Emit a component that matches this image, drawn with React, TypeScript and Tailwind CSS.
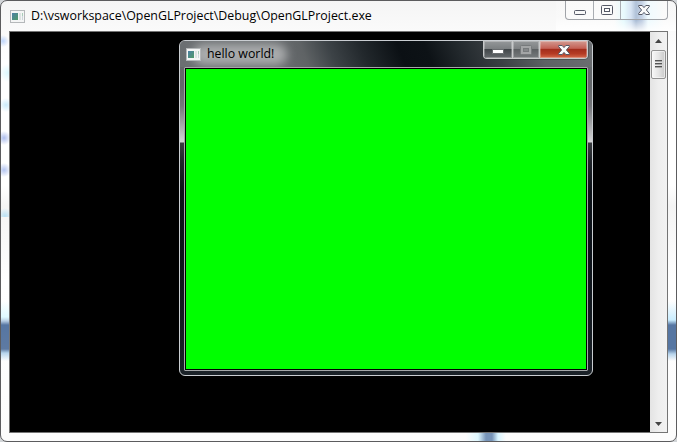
import type { ReactNode } from 'react';

const UI_FONT = "font-['Open_Sans','Noto_Sans',sans-serif]";

function AppIcon() {
  return (
    <svg width="15" height="13" viewBox="0 0 15 13" shapeRendering="crispEdges" className="shrink-0">
      <defs>
        <linearGradient id="screen" x1="0" y1="0" x2="1" y2="1">
          <stop offset="0" stopColor="#4c7fa6" />
          <stop offset="1" stopColor="#4f9a67" />
        </linearGradient>
      </defs>
      <rect width="15" height="13" fill="#b5b8ba" />
      <rect x="1" y="1" width="13" height="11" fill="#f4f5f5" />
      <rect x="2" y="3" width="6" height="7" fill="url(#screen)" />
      <rect x="9" y="3" width="2" height="7" fill="#dce3e2" />
      <rect x="12" y="3" width="1" height="3" fill="#a9cdb8" />
      <rect x="12" y="6" width="1" height="4" fill="#cdd5db" />
    </svg>
  );
}

function CloseGlyph() {
  return (
    <svg width="12" height="10" viewBox="0 0 12 10">
      <path
        d="M.7.5H4.2L6 2.6 7.8.5H11.3V1.6L8.4 5 11.3 8.4V9.5H7.8L6 7.4 4.2 9.5H.7V8.4L3.6 5 .7 1.6Z"
        fill="#fafafa"
        stroke="#555966"
        strokeWidth="1"
      />
    </svg>
  );
}

function MinGlyph({ dark }: { dark?: boolean }) {
  return dark ? (
    <svg width="12" height="5" viewBox="0 0 12 5">
      <rect x=".5" y=".5" width="11" height="4" rx=".5" fill="#fff" stroke="#6a6d70" />
    </svg>
  ) : (
    <svg width="12" height="5" viewBox="0 0 12 5">
      <rect x=".5" y=".5" width="11" height="4" rx="1" fill="#f8f8f8" stroke="#555966" />
    </svg>
  );
}

function MaxGlyph({ disabled }: { disabled?: boolean }) {
  const line = disabled ? '#777a7c' : '#555966';
  const fill = disabled ? '#a3a5a6' : '#fafafa';
  return (
    <svg width="12" height="10" viewBox="0 0 12 10" className="shrink-0">
      <rect x=".5" y=".5" width="11" height="9" rx="1" fill={fill} stroke={line} />
      <rect x="3.5" y="3.5" width="5" height="3" fill={disabled ? '#85888a' : '#fff'} stroke={line} />
    </svg>
  );
}

function Glow({ className }: { className: string }) {
  return <div className={`absolute ${className}`} />;
}

function ScrollBar() {
  return (
    <div className="flex w-[17px] shrink-0 flex-col items-center justify-between bg-gradient-to-r from-[#e4e4e4] via-[#eeeeee] to-[#f2f2f2]">
      <div className="flex w-full flex-col items-center">
        <div className="flex h-[18px] items-center">
          <svg width="7" height="4" viewBox="0 0 7 4">
            <path d="M0 4 3.5 0 7 4Z" fill="#444" />
          </svg>
        </div>
        <div className="flex h-[29px] w-[15px] flex-col items-center justify-center gap-px rounded-[2px] border border-[#929292] bg-gradient-to-r from-[#f8f8f8] via-[#e5e5e5] to-[#c9c9c9] pb-[2px] shadow-[inset_0_0_0_1px_#fafafa99]">
          <i className="h-[2px] w-[7px] border-t border-[#555] bg-[#aaa]" />
          <i className="h-[2px] w-[7px] border-t border-[#555] bg-[#aaa]" />
          <i className="h-[2px] w-[7px] border-t border-[#555] bg-[#aaa]" />
        </div>
      </div>
      <div className="flex h-[16px] items-center">
        <svg width="7" height="4" viewBox="0 0 7 4">
          <path d="M0 0 3.5 4 7 0Z" fill="#444" />
        </svg>
      </div>
    </div>
  );
}

function DarkButton({ className, children }: { className: string; children: ReactNode }) {
  return (
    <div className={`flex h-full items-center justify-center shadow-[inset_0_0_0_1px_#ffffff45] ${className}`}>
      {children}
    </div>
  );
}

function HelloWindow() {
  return (
    <div className="absolute top-[8px] left-[169px] flex h-[336px] w-[414px] flex-col overflow-hidden rounded-[6px] border border-[#c9cdd1] bg-[linear-gradient(180deg,#64686b_0px,#64686b_45px,#74777a_65px,#a9abad_85px,#d4d5d6_101px,#3a3d40_102px,#20242a_120px,#0c1218_150px,#0d131a_220px,#1b2228_334px)] px-[4px] pb-[4px]">
      <Glow className="inset-x-0 top-0 h-[26px] bg-[linear-gradient(68deg,#6b6f72_0px,#6c6f72_90px,#5f6365_120px,#3d4347_145px,#22282c_175px,#0b1014_210px,#0d1216_235px,#22282c_265px,#3a3f43_300px,#5d6164_340px,#6c6f72_390px)]" />
      <Glow className="top-[3px] left-[13px] h-[21px] w-[94px] rounded-full bg-[#a9abac] blur-[5px]" />
      <div className="relative flex h-[26px] shrink-0 items-start justify-between">
        <div className="flex h-[26px] items-center gap-[6px] pl-[2px]">
          <AppIcon />
          <span className={`${UI_FONT} text-[12.35px] leading-[16px] whitespace-nowrap text-black`}>hello world!</span>
        </div>
        <div className="flex h-[18px] w-[105px] overflow-hidden rounded-b-[4px] border border-t-0 border-[#c7c9ca] shadow-[0_0_0_1px_#30343766]">
          <DarkButton className="w-[28px] bg-[linear-gradient(180deg,#95989a_0%,#7c8082_45%,#42474a_50%,#666b6e_100%)]">
            <div className="pt-[4px]"><MinGlyph dark /></div>
          </DarkButton>
          <DarkButton className="w-[27px] border-l border-[#c7c9ca] bg-[linear-gradient(180deg,#95989a_0%,#7e8183_45%,#5d6163_50%,#777b7d_100%)]">
            <MaxGlyph disabled />
          </DarkButton>
          <DarkButton className="flex-1 border-l border-[#c7c9ca] bg-[linear-gradient(180deg,#d39a91_0%,#c46155_43%,#a42e1d_50%,#b53b24_75%,#d56b4e_100%)]">
            <CloseGlyph />
          </DarkButton>
        </div>
      </div>
      <div className="relative flex-1 rounded-[1px] border border-[#a5a7a9] bg-black p-px">
        <div className="h-full bg-[#00ff00]" />
      </div>
    </div>
  );
}

export default function App() {
  return (
    <div className="h-[442px] w-[677px] overflow-hidden bg-[#d2d5d8]">
      <div className="relative flex h-[442px] w-[677px] flex-col overflow-hidden rounded-[7px] border border-[#5c5c5e] bg-[linear-gradient(180deg,#f5f5f5_0px,#fafafa_29px,#fff_60px,#fff_185px,#f4f4f4_205px,#fff_280px,#fcfcfc_440px)] px-[8px] pb-[8px]">
        <Glow className="top-[26px] left-0 h-[190px] w-[8px] bg-[radial-gradient(circle_at_2px_14px,#bfd5fa,transparent_6px),radial-gradient(circle_at_7px_46px,#dcf8ff,transparent_9px),radial-gradient(circle_at_5px_78px,#caeafa,transparent_7px),radial-gradient(circle_at_3px_111px,#adbdec,transparent_7px),radial-gradient(circle_at_3px_143px,#b3c4f0,transparent_7px),radial-gradient(circle_at_4px_189px,#bae1f5,transparent_8px)]" />
        <Glow className="top-[300px] left-0 h-[60px] w-[8px] bg-[linear-gradient(180deg,transparent,#dff9ff_16px,#b6cce2_20px,#5676a2_24px,#5e7aa2_48px,#b6d4ec_52px,transparent_60px)]" />
        <Glow className="top-[300px] right-0 h-[60px] w-[8px] bg-[linear-gradient(180deg,transparent,#c9edff_19px,#5676a2_24px,#5676a2_48px,#b6d4ec_53px,transparent_60px)]" />
        <Glow className="bottom-0 left-[465px] h-[8px] w-[40px] bg-[linear-gradient(90deg,transparent,#dff8ff_12px,#7794b8_20px,#7794b8_26px,#d9f5ff_32px,transparent)]" />
        <Glow className="top-0 left-[613px] h-[30px] w-[50px] bg-[linear-gradient(90deg,transparent,#d9f7fb_10px,#bdd2eb_17px,#7d99bf_22px,#a1b6d5_28px,#e6f8ff_34px,transparent)]" />
        <Glow className="top-0 left-[555px] h-[30px] w-[121px] bg-[linear-gradient(180deg,#ffffff33_0px,#ffffff33_17px,#ffffffee_30px)]" />

        <div className="relative flex h-[30px] shrink-0 items-start justify-between">
          <div className="flex h-[30px] items-center gap-[6px] pl-[1px]">
            <AppIcon />
            <span className={`${UI_FONT} text-[12.38px] leading-[16px] whitespace-nowrap text-black`}>
              D:\vsworkspace\OpenGLProject\Debug\OpenGLProject.exe
            </span>
          </div>
          <div className="flex h-[19px] w-[103px] rounded-b-[4px] border border-t-0 border-[#a0a3a8] bg-white/25">
            <div className="flex w-[27px] items-center justify-center pt-[4px]"><MinGlyph /></div>
            <div className="flex w-[27px] items-center justify-center border-l border-[#a9adb2]"><MaxGlyph /></div>
            <div className="flex flex-1 items-center justify-center border-l border-[#a9adb2]"><CloseGlyph /></div>
          </div>
        </div>

        <div className="relative flex min-h-0 flex-1 border border-[#747474] bg-black">
          <div className="relative flex-1 bg-black">
            <HelloWindow />
          </div>
          <ScrollBar />
        </div>
      </div>
    </div>
  );
}
